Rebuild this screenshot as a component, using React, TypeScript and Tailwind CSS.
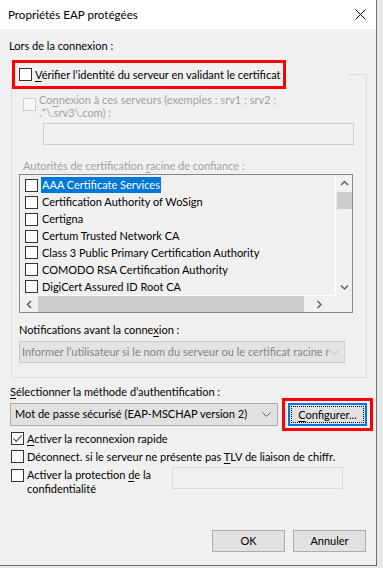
import React from 'react';

// Windows-style "Propriétés EAP protégées" dialog

function Box({ checked = false, disabled = false }: { checked?: boolean; disabled?: boolean }) {
  return (
    <span
      className={
        'w-[13px] h-[13px] shrink-0 border flex items-center justify-center ' +
        (disabled ? 'border-[#cccccc] bg-[#f7f7f7]' : 'border-[#333333] bg-white')
      }
    >
      {checked && (
        <svg width="11" height="11" viewBox="0 0 11 11">
          <path d="M1.5 5.5 L4.2 8.3 L9.6 2.4" fill="none" stroke="#555555" strokeWidth="1.2" />
        </svg>
      )}
    </span>
  );
}

function ChevronDown({ color = '#606060' }: { color?: string }) {
  return (
    <svg width="9" height="5" viewBox="0 0 9 5" className="shrink-0">
      <path d="M0.5 0.5 L4.5 4.5 L8.5 0.5" fill="none" stroke={color} strokeWidth="1" />
    </svg>
  );
}

function Arrow({ dir }: { dir: 'up' | 'down' | 'left' | 'right' }) {
  const d = {
    up: 'M1 5 L4.5 1.5 L8 5',
    down: 'M1 1.5 L4.5 5 L8 1.5',
    left: 'M5 1 L1.5 4.5 L5 8',
    right: 'M1.5 1 L5 4.5 L1.5 8',
  }[dir];
  const vertical = dir === 'up' || dir === 'down';
  return (
    <svg width={vertical ? 9 : 7} height={vertical ? 7 : 9} viewBox={vertical ? '0 0 9 7' : '0 0 7 9'}>
      <path d={d} fill="none" stroke="#606060" strokeWidth="1.5" />
    </svg>
  );
}

const U = ({ children }: { children: React.ReactNode }) => <span className="underline underline-offset-2">{children}</span>;

const authorities = [
  'AAA Certificate Services',
  'Certification Authority of WoSign',
  'Certigna',
  'Certum Trusted Network CA',
  'Class 3 Public Primary Certification Authority',
  'COMODO RSA Certification Authority',
  'DigiCert Assured ID Root CA',
];

export default function App() {
  return (
    <div className="w-[383px] h-[568px] bg-[#e9e9e9] overflow-hidden text-[11px] text-black [font-family:Lato,sans-serif]">
      <div className="w-[377px] h-[566px] border-r border-b border-[#6e6e6e] bg-[#f0f0f0] flex flex-col">
        {/* title bar */}
        <div className="h-[29px] shrink-0 bg-white flex items-center justify-between pl-[8px] pr-[10px]">
          <span className="leading-[15px] text-[11.6px]">Propriétés EAP protégées</span>
          <svg width="11" height="11" viewBox="0 0 11 11">
            <path d="M0.5 0.5 L10.5 10.5 M10.5 0.5 L0.5 10.5" stroke="#000" strokeWidth="1" />
          </svg>
        </div>

        <div className="flex-1 flex flex-col pl-[9px]">
          <div className="mt-[9px] leading-[15px]">Lors de la connexion :</div>

          {/* group box */}
          <div className="mt-[21px] ml-[2px] w-[356px] h-[304px] border border-[#dcdcdc] flex flex-col">
            <div className="-mt-[15px] flex h-[29px]">
              <div className="w-[274px] h-[29px] border-[3px] border-[#ff0000] bg-[#f0f0f0] flex items-center pl-[4px] overflow-hidden">
                <Box />
                <span className="ml-[3px] whitespace-nowrap leading-[15px]">
                  <U>V</U>érifier l’identité du serveur en validant le certificat
                </span>
              </div>
              <div className="w-[62px] h-[29px] bg-[#f0f0f0]" />
            </div>

            <div className="mt-[4px] ml-[11px] flex text-[#a0a0a0]">
              <div className="mt-[5px]">
                <Box disabled />
              </div>
              <div className="ml-[3px] leading-[13px] w-[280px]">
                Co<U>n</U>nexion à ces serveurs (exemples : srv1 ; srv2 ;
                <br />
                .*\.srv3\.com) :
              </div>
            </div>
            <div className="mt-[4px] ml-[31px] w-[311px] h-[22px] border border-[#cccccc] bg-[#f0f0f0]" />

            <div className="mt-[13px] ml-[11px] leading-[15px] text-[#a0a0a0]">
              Autorités de certification <U>r</U>acine de confiance :
            </div>

            {/* list box */}
            <div className="mt-[1px] ml-[7px] w-[334px] h-[139px] border border-[#828790] flex flex-col">
              <div className="flex h-[121px]">
                <div className="flex-1 pt-[2px] border-r border-b border-white flex flex-col overflow-hidden">
                  {authorities.map((a, i) => (
                    <div key={a} className="h-[17px] flex items-center pl-[5px] whitespace-nowrap">
                      <Box />
                      <span
                        className={
                          'ml-[3px] px-[1px] leading-[16px] ' + (i === 0 ? 'bg-[#0078d7] text-white' : '')
                        }
                      >
                        {a}
                      </span>
                    </div>
                  ))}
                </div>
                <div className="w-[16px] flex flex-col items-center">
                  <div className="h-[17px] flex items-center justify-center">
                    <Arrow dir="up" />
                  </div>
                  <div className="w-[15px] h-[17px] bg-[#cdcdcd]" />
                  <div className="flex-1" />
                  <div className="h-[17px] flex items-center justify-center">
                    <Arrow dir="down" />
                  </div>
                </div>
              </div>
              <div className="flex-1 flex">
                <div className="w-[315px] flex items-center">
                  <div className="w-[18px] flex justify-center">
                    <Arrow dir="left" />
                  </div>
                  <div className="w-[266px] h-full bg-[#cdcdcd]" />
                  <div className="flex-1 flex justify-center">
                    <Arrow dir="right" />
                  </div>
                </div>
              </div>
            </div>

            <div className="mt-[9px] ml-[7px] leading-[15px]">
              Notifications avant la conne<U>x</U>ion :
            </div>
            <div className="mt-[4px] ml-[7px] w-[326px] h-[22px] border border-[#cccccc] bg-[#e3e3e3] flex items-center pl-[2px] pr-[5px] text-[#838383]">
              <span className="flex-1 whitespace-nowrap overflow-hidden">
                Informer l’utilisateur si le nom du serveur ou le certificat racine n’est pas spécifié
              </span>
              <span className="ml-[1px]">
                <ChevronDown color="#b8b8b8" />
              </span>
            </div>
          </div>

          <div className="mt-[8px] ml-[1px] leading-[12px]">
            <U>S</U>électionner la méthode d’authentification :
          </div>

          <div className="ml-[1px] h-[33px] flex items-center">
            <div className="w-[268px] h-[23px] border border-[#adadad] bg-[#e1e1e1] flex items-center pl-[4px] pr-[6px]">
              <span className="flex-1 whitespace-nowrap overflow-hidden">Mot de passe sécurisé (EAP-MSCHAP version 2)</span>
              <ChevronDown />
            </div>
            <div className="ml-[4px] w-[91px] h-[33px] border-[3px] border-[#ff0000] flex items-center justify-center">
              <div className="w-[79px] h-[23px] border-2 border-[#0078d7] bg-[#e1e1e1] p-[1px]">
                <div className="w-full h-full border border-dotted border-black flex items-center justify-center leading-[15px]">
                  <span>
                    <U>C</U>onfigurer...
                  </span>
                </div>
              </div>
            </div>
          </div>

          <div className="ml-[2px] h-[15px] flex items-center">
            <Box checked />
            <span className="ml-[3px] leading-[15px]">
              <U>A</U>ctiver la reconnexion rapide
            </span>
          </div>

          <div className="mt-[3px] ml-[2px] h-[15px] flex items-center">
            <Box />
            <span className="ml-[3px] leading-[15px] whitespace-nowrap">
              Déconnect. si le serveur ne présente pas <U>T</U>LV de liaison de chiffr.
            </span>
          </div>

          <div className="mt-[3px] ml-[2px] flex">
            <div className="mt-[2px]">
              <Box />
            </div>
            <div className="ml-[3px] pt-[1px] w-[133px] leading-[14px]">
              Activer la protection <U>d</U>e la
              <br />
              confidentialité
            </div>
            <div className="ml-[12px] w-[171px] h-[22px] border border-[#d9d9d9] bg-[#f0f0f0]" />
          </div>

          <div className="mt-auto mb-[13px] mr-[10px] flex justify-end gap-[8px]">
            <div className="w-[73px] h-[22px] border border-[#adadad] bg-[#e1e1e1] flex items-center justify-center">OK</div>
            <div className="w-[73px] h-[22px] border border-[#adadad] bg-[#e1e1e1] flex items-center justify-center">Annuler</div>
          </div>
        </div>
      </div>
    </div>
  );
}
